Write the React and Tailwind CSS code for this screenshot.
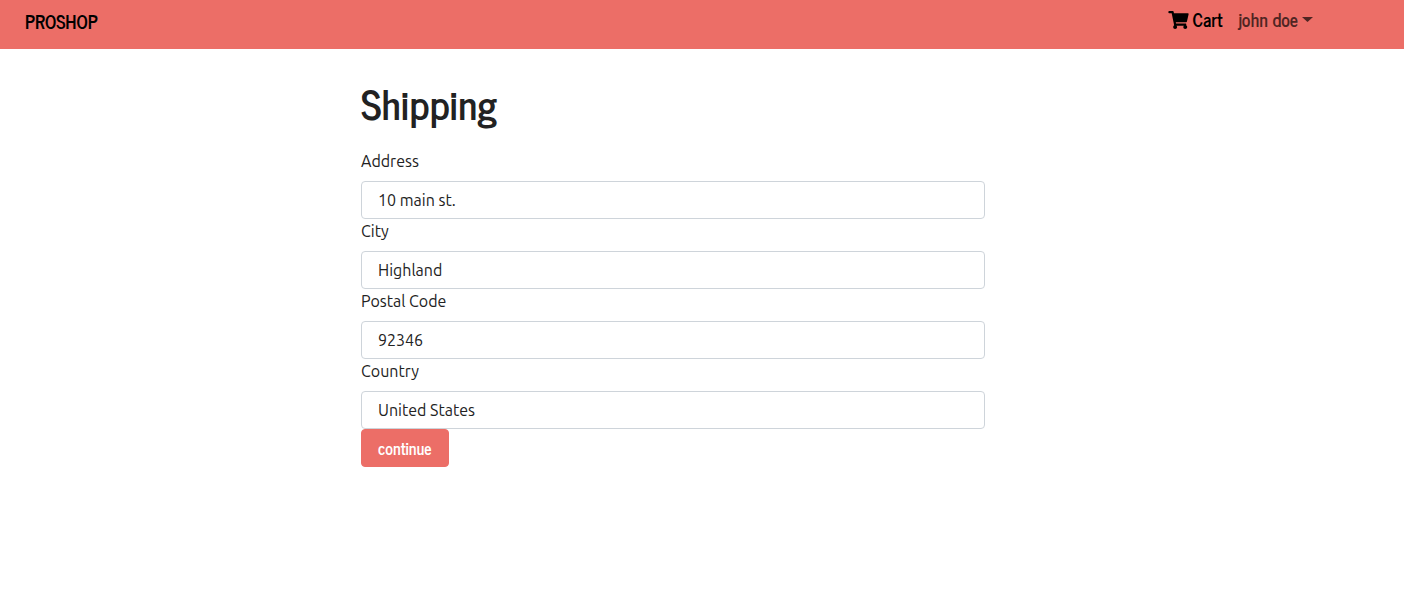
import { useState } from "react";
import { FaShoppingCart } from "react-icons/fa";

const initialFields = [
  { id: "address", label: "Address", value: "10 main st." },
  { id: "city", label: "City", value: "Highland" },
  { id: "postalCode", label: "Postal Code", value: "92346" },
  { id: "country", label: "Country", value: "United States" },
];

function Header() {
  return (
    <header className="flex h-[49px] items-start justify-between bg-[#ec6e67] pr-[91px] pl-[25px] font-['News_Cycle','Roboto_Condensed',Roboto,sans-serif] text-lg leading-6 font-bold">
      <a href="#home" className="pt-[9px] text-black">
        PROSHOP
      </a>
      <nav className="flex gap-4 pt-[7px]">
        <a href="#cart" className="flex items-center gap-1 text-black">
          <FaShoppingCart className="mt-0.5 h-[18px] w-[21px]" aria-hidden="true" />
          Cart
        </a>
        <button type="button" className="flex items-center gap-1 text-[#4f2523]">
          john doe
          <svg className="h-[5px] w-[11px]" viewBox="0 0 11 5" fill="currentColor" aria-hidden="true">
            <path d="M0 0h11L5.5 5z" />
          </svg>
        </button>
      </nav>
    </header>
  );
}

function Field({ id, label, value, onChange }) {
  return (
    <div className="flex flex-col gap-2">
      <label htmlFor={id}>{label}</label>
      <input
        id={id}
        type="text"
        value={value}
        onChange={onChange}
        className="h-[38px] w-full rounded border border-[#ced4da] bg-white px-4 outline-none"
      />
    </div>
  );
}

export default function App() {
  const [fields, setFields] = useState(initialFields);
  const update = (id, value) =>
    setFields(fields.map((f) => (f.id === id ? { ...f, value } : f)));

  return (
    <div className="min-h-screen bg-white font-[Ubuntu,'Noto_Sans',sans-serif] text-base leading-6 text-[#222222]">
      <Header />
      <main className="pt-8 pr-[58px]">
        <form className="mx-auto w-full max-w-[624px]" onSubmit={(e) => e.preventDefault()}>
          <h1 className="pb-6 font-['News_Cycle','Roboto_Condensed',Roboto,sans-serif] text-[40px] leading-11 font-bold">
            Shipping
          </h1>
          {fields.map((f) => (
            <Field key={f.id} {...f} onChange={(e) => update(f.id, e.target.value)} />
          ))}
          <button
            type="submit"
            className="h-[38px] rounded border border-[#ec6e67] bg-[#ec6e67] px-4 font-['News_Cycle','Roboto_Condensed',Roboto,sans-serif] text-base font-bold text-white"
          >
            continue
          </button>
        </form>
      </main>
    </div>
  );
}
